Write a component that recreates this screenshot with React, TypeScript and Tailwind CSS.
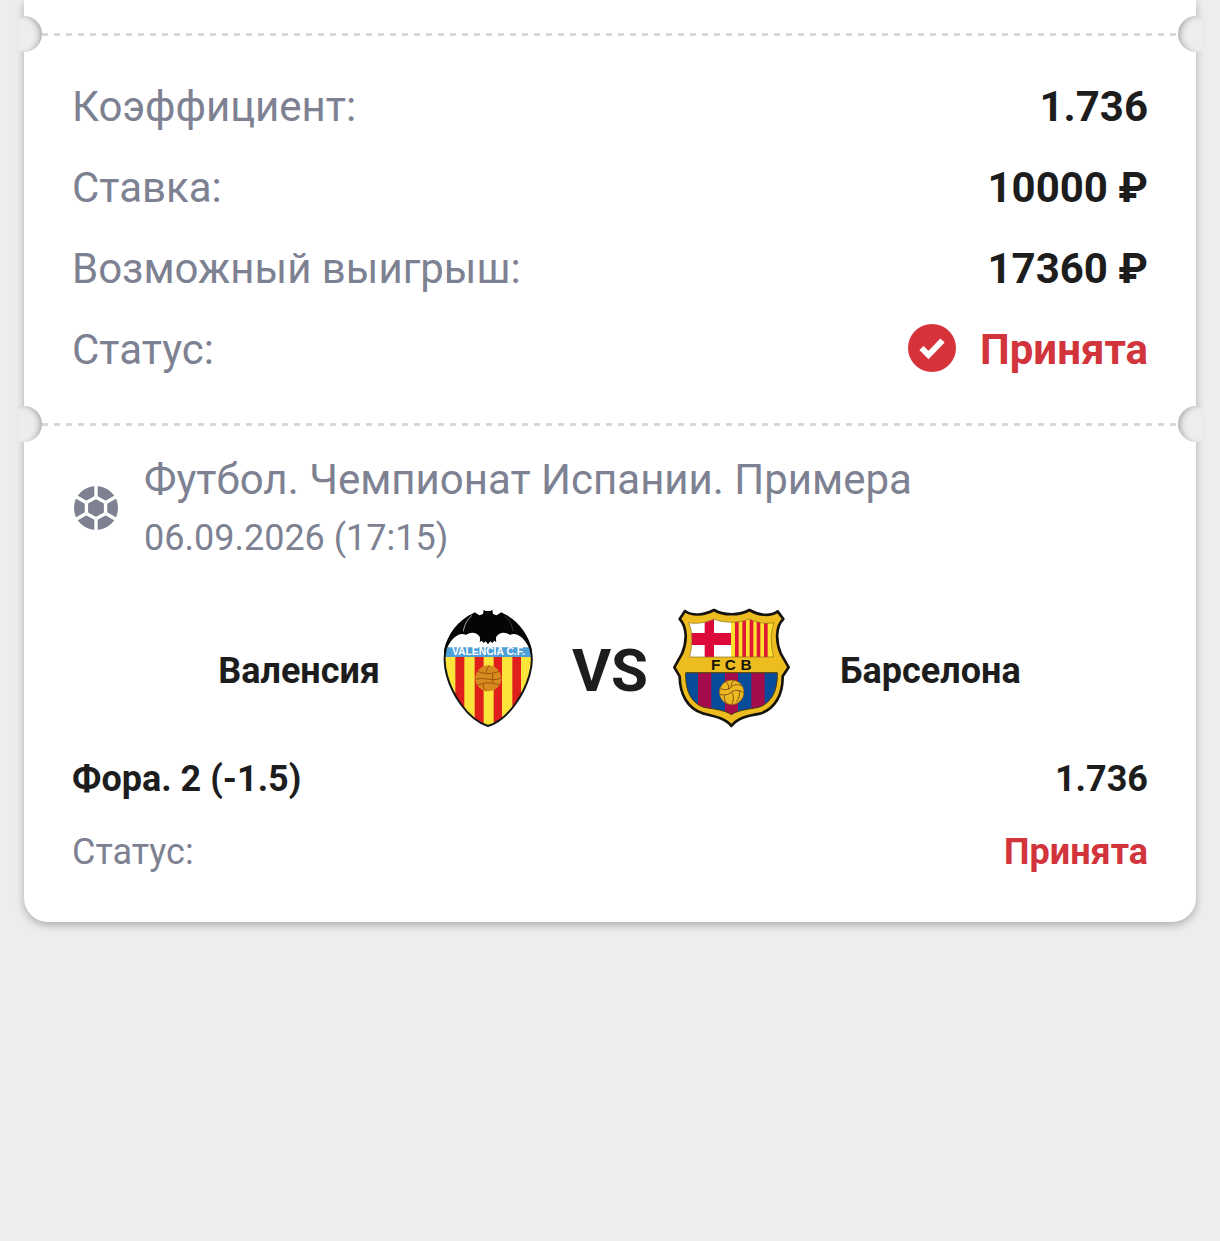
type Tone = "dark" | "accent";

interface SummaryRow {
  label: string;
  value: string;
  tone: Tone;
  accepted?: boolean;
}

const summary: SummaryRow[] = [
  { label: "Коэффициент:", value: "1.736", tone: "dark" },
  { label: "Ставка:", value: "10000 ₽", tone: "dark" },
  { label: "Возможный выигрыш:", value: "17360 ₽", tone: "dark" },
  { label: "Статус:", value: "Принята", tone: "accent", accepted: true },
];

const toneClass: Record<Tone, string> = {
  dark: "text-[#1d1d1d]",
  accent: "text-[#d2343c]",
};

function Divider() {
  return (
    <div className="-mx-[18px] flex items-center">
      <div className="size-9 shrink-0 rounded-full bg-[#ebedef] shadow-[inset_-5px_1px_6px_-3px_rgba(0,0,0,0.3)] [clip-path:inset(0_0_0_12px)]" />
      <div className="h-[3px] flex-1 bg-[repeating-linear-gradient(90deg,#d8d8d9_0_6px,transparent_6px_12px)]" />
      <div className="size-9 shrink-0 rounded-full bg-[#ebedef] shadow-[inset_5px_1px_6px_-3px_rgba(0,0,0,0.3)] [clip-path:inset(0_12px_0_0)]" />
    </div>
  );
}

function AcceptedIcon() {
  return (
    <svg viewBox="0 0 48 48" className="mb-1 size-12" aria-hidden="true">
      <circle cx="24" cy="24" r="24" fill="#d5323a" />
      <path d="M13.5 24 20.5 31 34.5 16.5" fill="none" stroke="#fff" strokeWidth="6" />
    </svg>
  );
}

function FootballIcon() {
  return (
    <svg viewBox="0 0 48 48" className="size-12 shrink-0" aria-hidden="true">
      <circle cx="24" cy="24" r="22" fill="#7d8191" />
      <g stroke="#fff" strokeWidth="3.4" fill="none">
        <path d="M24 13.2 33.6 18.6V29.4L24 34.8 14.4 29.4V18.6Z" />
        <path d="M24 13.5V0M24 34.5V48M33.5 18.7 46 11.6M33.5 29.3 46 36.4M14.5 18.7 2 11.6M14.5 29.3 2 36.4" />
      </g>
    </svg>
  );
}

function ValenciaCrest() {
  const outline =
    "M130 70C98 84 64 110 47 150C36 195 54 258 92 312C118 348 148 370 174 378C200 370 230 348 256 312C294 258 314 195 302 150C286 110 252 84 218 70Z";
  return (
    <svg viewBox="-6 24 360 360" className="size-[120px] shrink-0" role="img" aria-label="Валенсия">
      <defs>
        <clipPath id="valencia-shield">
          <path d={outline} />
        </clipPath>
      </defs>
      <g clipPath="url(#valencia-shield)">
        <path d="M30 60H320V150H30Z" fill="#fff" />
        <path d="M30 165H320V390H30Z" fill="#fce53a" />
        <path
          d="M76 165H103V390H76ZM134 165H161V390H134ZM191 165H216V390H191ZM247 165H273V390H247Z"
          fill="#df1f1c"
        />
        <path d="M30 142H320V171H30Z" fill="#4d9fd8" />
      </g>
      <circle cx="175" cy="235" r="39" fill="#d78a1d" />
      <path
        d="M143 214C163 224 190 222 207 214M137 238C160 230 190 246 213 234M143 256C163 246 190 246 207 256M178 197C170 206 168 214 170 220M160 250C158 260 162 268 168 273M188 222V248"
        fill="none"
        stroke="#99550e"
        strokeWidth="3"
      />
      <path
        d="M47 150C36 195 54 258 92 312C118 348 148 370 174 378C200 370 230 348 256 312C294 258 314 195 302 150"
        fill="none"
        stroke="#161616"
        strokeWidth="6"
      />
      <path
        d="M161 29 167 33H181L187 29 189 42 200 46 214 37 219 40C264 60 296 104 306 150V168C296 136 284 114 262 104C254 101 246 101 240 105C226 94 208 96 199 110C197 115 198 120 199 127L193 122 187 129 181 124 174 133 167 124 161 129 155 122 149 127C150 120 151 115 149 110C140 96 122 94 108 105C102 101 94 101 86 104C64 114 53 136 42 168V150C52 104 84 60 130 40L134 37 148 46 159 42Z"
        fill="#050505"
      />
      <path d="M126 46C110 60 103 76 100 94" fill="none" stroke="#a9a9a9" strokeWidth="3" />
      <path d="M224 48C240 60 246 76 249 94" fill="none" stroke="#555" strokeWidth="2" />
      <text
        x="175"
        y="166"
        textAnchor="middle"
        fill="#fff"
        className="font-['Liberation_Sans'] text-[31px] font-bold"
      >
        VALENCIA C.F.
      </text>
    </svg>
  );
}

function BarcelonaCrest() {
  const outer =
    "M60 33C82 49 116 46 147 30C174 47 225 47 253 30C283 47 316 50 338 34L355 57C333 78 331 120 347 160L371 202L353 229C354 283 330 327 285 341C248 347 218 354 199 378C181 355 150 349 113 340C68 326 44 282 44 229L28 202L51 161C68 121 65 79 44 57Z";
  const upperField =
    "M71 68C97 73 124 68 147 57C174 70 225 70 252 57C277 68 302 73 327 68C318 92 315 127 326 171H74C84 127 82 92 71 68Z";
  const lowerField =
    "M62 218H337C339 276 317 310 281 322C250 328 220 330 199 344C179 330 150 328 117 322C81 311 60 276 62 218Z";
  return (
    <svg viewBox="21 24 360 360" className="size-[120px] shrink-0" role="img" aria-label="Барселона">
      <defs>
        <clipPath id="barcelona-upper">
          <path d={upperField} />
        </clipPath>
        <clipPath id="barcelona-lower">
          <path d={lowerField} />
        </clipPath>
      </defs>
      <path d={outer} fill="#edbd20" stroke="#16140d" strokeWidth="8" strokeLinejoin="round" />
      <g clipPath="url(#barcelona-upper)">
        <path d="M50 40H200V171H50Z" fill="#fff" />
        <path d="M119 40H147V171H119ZM50 99H200V135H50Z" fill="#db0a3b" />
        <path d="M198 40H350V171H198Z" fill="#fce22c" />
        <path
          d="M210 40H221V171H210ZM232 40H243V171H232ZM254 40H265V171H254ZM275 40H286V171H275ZM297 40H308V171H297Z"
          fill="#de1835"
        />
      </g>
      <g clipPath="url(#barcelona-lower)">
        <path d="M50 218H350V360H50Z" fill="#064c9b" />
        <path
          d="M99 218H139V360H99ZM180 218H219V360H180ZM259 218H299V360H259Z"
          fill="#a50c4b"
        />
      </g>
      <path d={upperField} fill="none" stroke="#8a6c1c" strokeWidth="2" />
      <path d={lowerField} fill="none" stroke="#4b3a12" strokeWidth="3" />
      <g
        fill="#151208"
        textAnchor="middle"
        className="font-['Liberation_Sans'] text-[46px] font-bold"
      >
        <text x="152" y="211">F</text>
        <text x="196" y="211">C</text>
        <text x="243" y="211">B</text>
      </g>
      <circle cx="200" cy="277" r="37" fill="#efb923" stroke="#7c5513" strokeWidth="2" />
      <path
        d="M166 264C176 272 190 270 199 261C208 252 222 252 231 259M183 245C190 252 192 259 190 268M208 241C200 246 197 254 199 261M164 282C178 288 190 284 199 276C210 268 226 270 236 278M199 276C206 284 208 298 200 313M178 286C176 296 180 304 186 310M222 272C226 284 222 296 214 306"
        fill="none"
        stroke="#7c5513"
        strokeWidth="3"
      />
    </svg>
  );
}

export default function App() {
  return (
    <div className="min-h-screen bg-[#ebedef] px-6 font-[Roboto,sans-serif] text-[#7d8191]">
      <main className="rounded-b-3xl bg-white shadow-[0_3px_8px_rgba(0,0,0,0.28)]">
        <div className="h-4" />
        <Divider />

        <dl className="flex flex-col gap-6 px-12 pt-[26px] pb-7 text-[42px] leading-[57px]">
          {summary.map((row) => (
            <div key={row.label} className="flex items-center justify-between">
              <dt>{row.label}</dt>
              <dd className={`flex items-center gap-6 font-bold ${toneClass[row.tone]}`}>
                {row.accepted && <AcceptedIcon />}
                {row.value}
              </dd>
            </div>
          ))}
        </dl>

        <Divider />

        <section className="px-12 pt-2 pb-[43px]">
          <header className="flex items-center gap-6">
            <FootballIcon />
            <div>
              <h1 className="text-[42px] leading-[60px]">Футбол. Чемпионат Испании. Примера</h1>
              <p className="text-[36px] leading-[56px]">06.09.2026 (17:15)</p>
            </div>
          </header>

          <div className="mt-[42px] flex items-center text-[#1d1d1d]">
            <p className="flex-1 pt-1.5 pr-12 text-right text-[36px] font-bold">Валенсия</p>
            <ValenciaCrest />
            <p className="w-[124px] pt-1.5 text-center text-[60px] font-bold">VS</p>
            <BarcelonaCrest />
            <p className="flex-1 pt-1.5 pl-12 text-[36px] font-bold">Барселона</p>
          </div>

          <div className="mt-6 flex justify-between text-[36px] leading-[54px] font-bold text-[#1d1d1d]">
            <p>Фора. 2 (-1.5)</p>
            <p>1.736</p>
          </div>
          <div className="mt-[19px] flex justify-between text-[36px] leading-[54px]">
            <p>Статус:</p>
            <p className="font-bold text-[#d2343c]">Принята</p>
          </div>
        </section>
      </main>
    </div>
  );
}
